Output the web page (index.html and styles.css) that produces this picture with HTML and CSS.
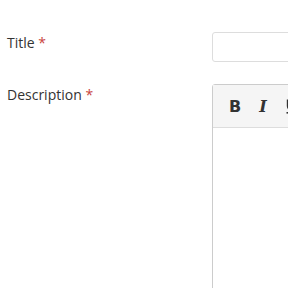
FILE: index.html
```html
<!DOCTYPE html>
<html lang="en">
<head>
    <meta charset="UTF-8">
    <title>Form</title>
    <link rel="stylesheet" href="styles.css">
</head>
<body>

<form class="form">
    <div class="form-row">
        <label class="form-label">Title <span class="req">*</span></label>
        <div class="form-field">
            <input type="text" class="text-input">
        </div>
    </div>
    <div class="form-row">
        <label class="form-label">Description <span class="req">*</span></label>
        <div class="form-field">
            <div class="editor">
                <div class="toolbar">
                    <button type="button" class="tool tool-b">B</button>
                    <button type="button" class="tool tool-i">I</button>
                    <button type="button" class="tool tool-u" aria-label="Underline">
                        <svg width="12" height="16" viewBox="0 0 12 16">
                            <path d="M2 1.5v6.5a4 4 0 0 0 8 0V1.5" fill="none" stroke="#333" stroke-width="2.4"/>
                            <rect x="0.5" y="14" width="11" height="1.6" fill="#333"/>
                        </svg>
                    </button>
                </div>
                <div class="editor-body"></div>
            </div>
        </div>
    </div>
</form>

</body>
</html>
```

FILE: styles.css
```css
body {
    margin: 0;
    font-family: "Open Sans", sans-serif;
    font-size: 14px;
    color: #333;
    overflow: hidden;
    height: 288px;
}
.form {
    padding: 32px 0 0 7px;
}
.form-row {
    display: grid;
    grid-template-columns: 205px 76px;
    margin-bottom: 22px;
}
.form-field {
    width: 300px;
}
.form-label {
    line-height: 20px;
    padding-top: 1px;
}
.req {
    color: #c9443c;
}
.text-input {
    box-sizing: border-box;
    width: 100%;
    height: 30px;
    border: 1px solid #ddd;
    border-radius: 3px;
    outline: none;
}
.editor {
    border: 1px solid #ccc;
    border-radius: 3px 3px 0 0;
    height: 240px;
}
.toolbar {
    background-color: #f5f5f5;
    border-bottom: 1px solid #ddd;
    height: 42px;
    display: flex;
    align-items: center;
    padding-left: 15px;
    gap: 14px;
}
.tool {
    border: none;
    background: none;
    padding: 0;
    width: 14px;
    height: 18px;
    display: flex;
    align-items: center;
    justify-content: center;
    font-family: "DejaVu Sans", sans-serif;
    font-size: 16px;
    font-weight: bold;
    color: #333;
}
.tool-i {
    font-family: "DejaVu Serif", serif;
    font-style: italic;
}
.tool-u {
    justify-content: flex-end;
}
```
